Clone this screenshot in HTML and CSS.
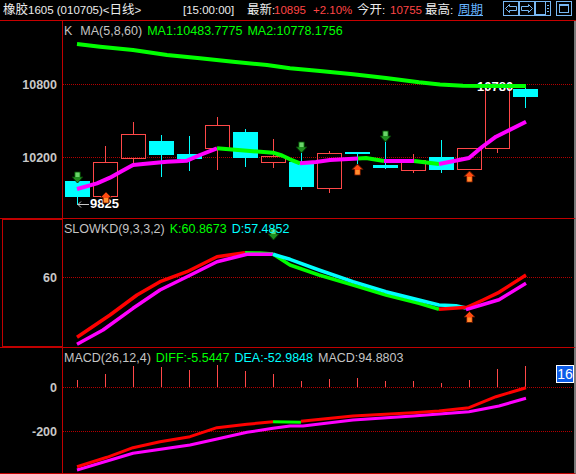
FILE: index.html
```html
<!DOCTYPE html>
<html>
<head>
<meta charset="utf-8">
<link rel="stylesheet" href="styles.css">
</head>
<body>
<div class="app">
  <div class="topbar">
    <span class="tb-title"><span class="cj">橡胶</span>1605 (010705)&lt;<span class="cj">日线</span>&gt;</span>
    <span class="tb-time">[15:00:00]</span>
    <span class="tb-lbl w-zx"><span class="cj">最新</span>:</span>
    <span class="tb-red w-last">10895</span>
    <span class="tb-red w-pct">+2.10%</span>
    <span class="tb-lbl w-jk"><span class="cj">今开</span>:</span>
    <span class="tb-red w-open">10755</span>
    <span class="tb-lbl w-zg"><span class="cj">最高</span>:</span>
    <span class="tb-link cj">周期</span>
    <div class="tb-btns">
      <span class="btn"><svg width="14" height="13" viewBox="0 0 14 13"><path class="ico" d="M1.5,6.5 L5.5,2.5 V4.5 H12.5 V8.5 H5.5 V10.5 Z"/></svg></span>
      <span class="btn"><svg width="14" height="13" viewBox="0 0 14 13"><path class="ico" d="M12.5,6.5 L8.5,2.5 V4.5 H1.5 V8.5 H8.5 V10.5 Z"/></svg></span>
      <span class="btn"><svg width="14" height="13" viewBox="0 0 14 13"><path class="ico" d="M9.5,0 V13 M0,12.5 H9.5"/><rect class="icof" x="11" y="3" width="2" height="1"/><rect class="icof" x="11" y="6" width="2" height="1"/><rect class="icof" x="11" y="9" width="2" height="1"/></svg></span>
      <span class="btn btn-gap"><svg width="14" height="13" viewBox="0 0 14 13"><rect class="ico" x="2.5" y="2.5" width="9" height="8"/><rect class="icof" x="2" y="2" width="10" height="2"/></svg></span>
    </div>
  </div>

  <div class="panel main">
    <div class="axis">
      <svg width="62" height="197" viewBox="0 21 62 197">
        <text class="ax" x="57" y="89">10800</text>
        <text class="ax" x="57" y="162">10200</text>
      </svg>
    </div>
    <div class="plot">
      <svg width="511" height="197" viewBox="63 21 511 197">
        <defs>
          <g id="adn">
            <path d="M-3,0 H3 V5 H5.5 L0,11 L-5.5,5 H-3 Z" fill="#1e8e1e" stroke="#053a05" stroke-width="1"/>
            <rect x="-2" y="0.5" width="4" height="4.5" fill="#6ad46a"/>
          </g>
          <g id="aup">
            <path d="M0,0 L5.5,5.5 H3 V11 H-3 V5.5 H-5.5 Z" fill="#ff4a10" stroke="#5a1800" stroke-width="1"/>
            <rect x="-2" y="6" width="4" height="4.5" fill="#ff9030"/>
          </g>
        </defs>
        <line class="grid" x1="63" y1="84.5" x2="573" y2="84.5"/>
        <line class="grid" x1="63" y1="157.5" x2="573" y2="157.5"/>

        <line class="wd" x1="77.5" y1="181" x2="77.5" y2="205"/>
        <rect class="dn" x="65" y="181" width="25" height="16"/>
        <line class="wu" x1="105.5" y1="146" x2="105.5" y2="162"/>
        <rect class="up" x="93.5" y="162.5" width="24" height="34"/>
        <line class="wu" x1="133.5" y1="122" x2="133.5" y2="134"/>
        <line class="wu" x1="133.5" y1="159" x2="133.5" y2="166"/>
        <rect class="up" x="121.5" y="134.5" width="24" height="24"/>
        <line class="wd" x1="161.5" y1="135" x2="161.5" y2="177"/>
        <rect class="dn" x="149" y="141" width="25" height="14"/>
        <line class="wd" x1="189.5" y1="136" x2="189.5" y2="171"/>
        <rect class="dn" x="177" y="154" width="25" height="5"/>
        <line class="wu" x1="217.5" y1="117" x2="217.5" y2="125"/>
        <line class="wu" x1="217.5" y1="149" x2="217.5" y2="170"/>
        <rect class="up" x="205.5" y="125.5" width="24" height="23"/>
        <line class="wd" x1="245.5" y1="129" x2="245.5" y2="167"/>
        <rect class="dn" x="233" y="132" width="25" height="26"/>
        <line class="wu" x1="273.5" y1="139" x2="273.5" y2="156"/>
        <line class="wu" x1="273.5" y1="163" x2="273.5" y2="168"/>
        <rect class="up" x="261.5" y="156.5" width="24" height="6"/>
        <line class="wd" x1="301.5" y1="152" x2="301.5" y2="190"/>
        <rect class="dn" x="289" y="162" width="25" height="25"/>
        <line class="wu" x1="329.5" y1="151" x2="329.5" y2="153"/>
        <line class="wu" x1="329.5" y1="189" x2="329.5" y2="193"/>
        <rect class="up" x="317.5" y="153.5" width="24" height="35"/>
        <line class="wd" x1="357.5" y1="152" x2="357.5" y2="164"/>
        <rect class="dn" x="345" y="152" width="25" height="2"/>
        <line class="wd" x1="385.5" y1="141" x2="385.5" y2="169"/>
        <rect class="dn" x="373" y="165" width="25" height="3"/>
        <line class="wu" x1="413.5" y1="154" x2="413.5" y2="160"/>
        <line class="wu" x1="413.5" y1="171" x2="413.5" y2="173"/>
        <rect class="up" x="401.5" y="160.5" width="24" height="10"/>
        <line class="wd" x1="441.5" y1="140" x2="441.5" y2="173"/>
        <rect class="dn" x="429" y="157" width="25" height="13"/>
        <rect class="up" x="457.5" y="148.5" width="24" height="21"/>
        <line class="wu" x1="497.5" y1="149" x2="497.5" y2="153"/>
        <rect class="up" x="485.5" y="85.5" width="24" height="63"/>
        <line class="wd" x1="525.5" y1="84" x2="525.5" y2="108"/>
        <rect class="dn" x="513" y="89" width="25" height="8"/>

        <path class="lowarr" d="M78,204.5 H89 M78,204.5 L81,201.5 M78,204.5 L81,207.5"/>
        <text class="val" x="90" y="207.5">9825</text>
        <text class="val" x="477" y="91">10780</text>

        <polyline class="ma ma-g" points="77,44 100,46.7 133,50 167,55 200,58.3 233,61.7 267,65 290,68.3 320,71 353,74.3 386,78 419,82.3 440,84.5 463,85.7 490,86 526,86"/>

        <polyline class="ma ma-m" points="77,189 97,183.3 110,177.7 122,171 133,165 143,164 167,161.7 187,160.7 200,155 217,148.3"/>
        <polyline class="ma ma-g" points="217,148.3 250,151 273,152.7 282,155.5 290,159.3 300,163.3"/>
        <polyline class="ma ma-m" points="300,163.3 316,162 330,160 358,158.5"/>
        <polyline class="ma ma-g" points="358,158.5 366,158 384,161"/>
        <polyline class="ma ma-m" points="384,161 414,161"/>
        <polyline class="ma ma-g" points="414,161 439,164"/>
        <polyline class="ma ma-m" points="439,164 469,158 482,147 496,136.7 506,131.7 526,121.7"/>

        <use href="#adn" x="77.5" y="172"/>
        <use href="#adn" x="301.5" y="142"/>
        <use href="#adn" x="385.5" y="131"/>
        <use href="#aup" x="106" y="192"/>
        <use href="#aup" x="357.5" y="164"/>
        <use href="#aup" x="469.5" y="171"/>
      </svg>
      <div class="ph"><span>K</span><span class="sp2">MA(5,8,60)</span><span class="g sp1">MA1:10483.7775</span><span class="g sp1">MA2:10778.1756</span></div>
    </div>
  </div>

  <div class="panel kd">
    <div class="axis sel">
      <svg width="59" height="126" viewBox="3 220 59 126">
        <text class="ax" x="57" y="281.5">60</text>
      </svg>
    </div>
    <div class="plot">
      <svg width="511" height="128" viewBox="63 219 511 128">
        <line class="grid" x1="63" y1="277.5" x2="573" y2="277.5"/>
        <use href="#adn" x="273.5" y="229"/>
        <polyline class="ln ln-r" points="77,337.3 110,315 137,295 160,281.7 187,271.7 217,256.7 245,252.7"/>
        <polyline class="ln ln-g" points="245,252.7 260,253 273,254"/>
        <polyline class="ln ln-m" points="77,344.3 103,330 133,308.3 160,290 187,276.7 217,261.7 247,254.3 273,254.3"/>
        <polyline class="ln ln-g" points="273,254 290,265 319,275 353,285 386,295 419,303.3 439,309.3"/>
        <polyline class="ln ln-c" points="273,254.3 290,259.3 319,270 353,281.7 386,291.7 419,300 439,305 456,305.7 466,308"/>
        <polyline class="ln ln-r" points="439,309.3 467,307.3 483,300 499,292.3 526,275"/>
        <polyline class="ln ln-m" points="466,309.7 483,304.5 499,299.7 526,283.3"/>
        <use href="#aup" x="469.5" y="311.5"/>
      </svg>
      <div class="ph"><span>SLOWKD(9,3,3,2)</span><span class="g sp1">K:60.8673</span><span class="c sp1">D:57.4852</span></div>
    </div>
  </div>

  <div class="panel macd">
    <div class="axis">
      <svg width="62" height="125" viewBox="0 348 62 125">
        <text class="ax" x="57" y="391.5">0</text>
        <text class="ax" x="57" y="435.5">-200</text>
      </svg>
    </div>
    <div class="plot">
      <svg width="511" height="125" viewBox="63 348 511 125">
        <line class="grid" x1="63" y1="387.5" x2="573" y2="387.5"/>
        <line class="grid" x1="63" y1="431.5" x2="573" y2="431.5"/>
        <line class="bar" x1="77.5" y1="380" x2="77.5" y2="387"/>
        <line class="bar" x1="105.5" y1="374" x2="105.5" y2="387"/>
        <line class="bar" x1="133.5" y1="366" x2="133.5" y2="387"/>
        <line class="bar" x1="161.5" y1="367" x2="161.5" y2="387"/>
        <line class="bar" x1="189.5" y1="370" x2="189.5" y2="387"/>
        <line class="bar" x1="217.5" y1="365" x2="217.5" y2="387"/>
        <line class="bar" x1="245.5" y1="371" x2="245.5" y2="387"/>
        <line class="bar" x1="273.5" y1="374" x2="273.5" y2="387"/>
        <line class="bar" x1="301.5" y1="381" x2="301.5" y2="387"/>
        <line class="bar" x1="329.5" y1="379" x2="329.5" y2="387"/>
        <line class="bar" x1="357.5" y1="378" x2="357.5" y2="387"/>
        <line class="bar" x1="385.5" y1="381" x2="385.5" y2="387"/>
        <line class="bar" x1="413.5" y1="381" x2="413.5" y2="387"/>
        <line class="bar" x1="441.5" y1="383" x2="441.5" y2="387"/>
        <line class="bar" x1="469.5" y1="380" x2="469.5" y2="387"/>
        <line class="bar" x1="497.5" y1="369" x2="497.5" y2="387"/>
        <line class="bar" x1="525.5" y1="366" x2="525.5" y2="387"/>
        <polyline class="ln2 ln-m" points="77,470 133,453.3 190,445 217,439 247,432.3 273,428.3 290,426 303,426 353,420 413,416 469,411.7 499,406 526,398.3"/>
        <polyline class="ln2 ln-r" points="77,466.7 107,457.3 133,447.7 160,441.7 190,436.7 217,427.7 247,424.3 273,421.7"/>
        <polyline class="ln2 ln-g" points="273,421.7 301,422.3"/>
        <polyline class="ln2 ln-r" points="301,421.3 353,416 413,412.7 439,411 469,407.7 496,396.7 526,387.7"/>
      </svg>
      <div class="ph"><span>MACD(26,12,4)</span><span class="g sp1">DIFF:-5.5447</span><span class="c sp1">DEA:-52.9848</span><span class="sp1">MACD:94.8803</span></div>
      <span class="badge">16</span>
    </div>
  </div>
</div>
</body>
</html>
```

FILE: styles.css
```css
* { box-sizing: border-box; }
html, body { margin: 0; padding: 0; background: #000; }
body {
  width: 576px;
  height: 474px;
  overflow: hidden;
  font-family: "Liberation Sans", "Noto Sans CJK SC", sans-serif;
}
.app {
  display: flex;
  flex-direction: column;
  width: 576px;
  height: 474px;
}

/* top bar */
.topbar {
  height: 21px;
  border-bottom: 1px solid #c80000;
  display: flex;
  align-items: flex-start;
  font-size: 11.5px;
  line-height: 20px;
  color: #ececec;
  white-space: nowrap;
}
.topbar > span { flex: none; }
.cj { font-size: 12.5px; }
.tb-title { width: 183px; padding-left: 3px; }
.tb-time { width: 64px; }
.tb-red { color: #ff4545; }
.w-zx { width: 27px; }
.w-last { width: 39px; }
.w-pct { width: 44px; }
.w-jk { width: 33px; }
.w-open { width: 35px; }
.w-zg { width: 33px; }
.tb-link {
  width: 25px;
  color: #66b4ff;
  text-decoration: underline;
}
.tb-btns {
  display: flex;
  margin-left: 20px;
  padding-top: 1px;
}
.btn {
  display: block;
  width: 16px;
  height: 15px;
  border: 1px solid #78b8f4;
}
.btn svg { display: block; }
.btn-gap { margin-left: 5px; }
.ico { fill: none; stroke: #78b8f4; stroke-width: 1; }
.icof { fill: #78b8f4; }

/* panels */
.panel {
  display: flex;
  width: 576px;
  flex: none;
  border-bottom: 1px solid #c00000;
  border-right: 2px solid #7a7a7a;
}
.main { height: 198px; }
.kd { height: 129px; }
.macd { height: 126px; }

.axis {
  flex: none;
  width: 63px;
  border-right: 1px solid #c00000;
}
.axis.sel {
  width: 61px;
  margin-left: 2px;
  border-left: 1px solid #c00000;
  border-top: 1px solid #c00000;
  border-bottom: 1px solid #c00000;
}
.axis svg { display: block; }
.ax {
  fill: #c8c8c8;
  font: bold 12.5px "Liberation Sans", sans-serif;
  text-anchor: end;
}

.plot {
  position: relative;
  flex: none;
  width: 511px;
}
.plot svg { display: block; }

.ph {
  position: absolute;
  left: 1px;
  top: 3px;
  font-size: 12.5px;
  line-height: 14px;
  color: #c4c4c4;
  white-space: nowrap;
}
.ph .g { color: #00ff00; }
.ph .c { color: #00ffff; }
.sp1 { margin-left: 5px; }
.sp2 { margin-left: 8px; }

.badge {
  position: absolute;
  left: 493px;
  top: 17px;
  width: 18px;
  height: 18px;
  background: #0c5ce8;
  border: 1px solid #ffffff;
  color: #ffffff;
  font-size: 14px;
  line-height: 16px;
  text-align: center;
}

/* chart primitives */
.grid {
  stroke: #b40000;
  stroke-width: 1;
  stroke-dasharray: 1 1;
  shape-rendering: crispEdges;
}
.up { fill: none; stroke: #ff4848; stroke-width: 1; shape-rendering: crispEdges; }
.dn { fill: #00ffff; shape-rendering: crispEdges; }
.wu { stroke: #ff4848; stroke-width: 1; shape-rendering: crispEdges; }
.wd { stroke: #00ffff; stroke-width: 1; shape-rendering: crispEdges; }
.bar { stroke: #ff4848; stroke-width: 1; shape-rendering: crispEdges; }
.lowarr { fill: none; stroke: #c8c8c8; stroke-width: 1; }
.val {
  fill: #ffffff;
  font: bold 13px "Liberation Sans", sans-serif;
}
.ma { fill: none; stroke-width: 4; stroke-linejoin: round; }
.ma-g { stroke: #00ff00; }
.ma-m { stroke: #ff00ff; }
.ln { fill: none; stroke-width: 3.5; stroke-linejoin: round; }
.ln2 { fill: none; stroke-width: 3; stroke-linejoin: round; }
.ln-r { stroke: #ff0000; }
.ln-g { stroke: #00ff00; }
.ln-m { stroke: #ff00ff; }
.ln-c { stroke: #00ffff; }
```
